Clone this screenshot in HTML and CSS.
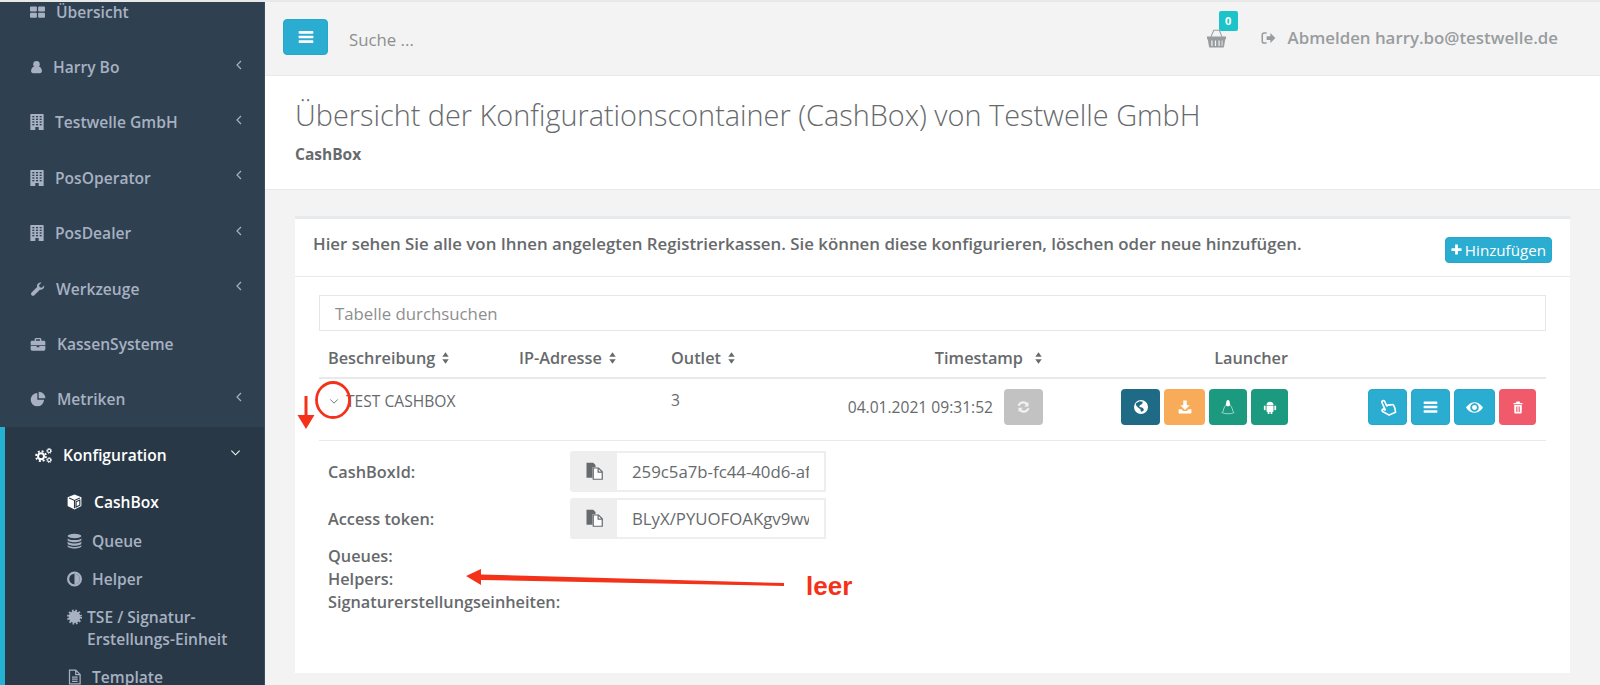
FILE: index.html
```html
<!DOCTYPE html>
<html lang="de">
<head>
    <meta charset="UTF-8">
    <title>Konfigurationscontainer</title>
    <link rel="stylesheet" href="styles.css">
</head>
<body>
    <svg class="sprite" xmlns="http://www.w3.org/2000/svg">
        <symbol id="i-grid" viewBox="0 0 24 24"><rect x="0" y="3" width="11" height="8" rx="1.500"/><rect x="13" y="3" width="11" height="8" rx="1.500"/><rect x="0" y="13" width="11" height="8" rx="1.500"/><rect x="13" y="13" width="11" height="8" rx="1.500"/></symbol>
        <symbol id="i-user" viewBox="0 0 24 24"><circle cx="12" cy="7" r="6"/><path d="M2 20c0-5 2-8 6-9 1 1 2.500 1.500 4 1.500s3-.5 4-1.500c4 1 6 4 6 9 0 2-1.500 3.500-3.500 3.500h-13C3.500 23.500 2 22 2 20z"/></symbol>
        <symbol id="i-building" viewBox="2 0 20 24"><path d="M3 0h18a1 1 0 0 1 1 1v23H2V1a1 1 0 0 1 1-1z"/><g fill="#2f4050"><rect x="5" y="3" width="3" height="2"/><rect x="10.500" y="3" width="3" height="2"/><rect x="16" y="3" width="3" height="2"/><rect x="5" y="7" width="3" height="2"/><rect x="10.500" y="7" width="3" height="2"/><rect x="16" y="7" width="3" height="2"/><rect x="5" y="11" width="3" height="2"/><rect x="10.500" y="11" width="3" height="2"/><rect x="16" y="11" width="3" height="2"/><rect x="5" y="15" width="3" height="2"/><rect x="10.500" y="15" width="3" height="2"/><rect x="16" y="15" width="3" height="2"/><rect x="9.500" y="19.500" width="5" height="4.500"/></g></symbol>
        <symbol id="i-wrench" viewBox="0 0 24 24"><path d="M22.500 6.200c.3 1 .3 2 0 3-.8 2.900-3.800 4.600-6.700 3.800l-8.900 8.900c-1.200 1.200-3.200 1.200-4.400 0s-1.200-3.200 0-4.400l8.900-8.900c-.8-2.900.9-5.900 3.800-6.700 1-.3 2-.3 3 0l-3.700 3.700.9 3.600 3.600.9z"/></symbol>
        <symbol id="i-briefcase" viewBox="0 0 24 24"><path fill-rule="evenodd" d="M9 3h6a2 2 0 0 1 2 2v2h4a2 2 0 0 1 2 2v5H1V9a2 2 0 0 1 2-2h4V5a2 2 0 0 1 2-2zm0 2v2h6V5z"/><path d="M1 15h9v2h4v-2h9v5a2 2 0 0 1-2 2H3a2 2 0 0 1-2-2z"/></symbol>
        <symbol id="i-pie" viewBox="0 0 24 24"><path d="M11 3v10h10a10 10 0 1 1-10-10z"/><path d="M13 1a10 10 0 0 1 10 10H13z"/></symbol>
        <symbol id="i-cogs" viewBox="0 0 24 24"><g fill="none" stroke="currentColor"><circle cx="8.500" cy="13" r="4.200" stroke-width="2.800"/><circle cx="8.500" cy="13" r="7" stroke-width="2.600" stroke-dasharray="2.800 2.700"/><circle cx="20" cy="5.500" r="2.200" stroke-width="1.500"/><circle cx="20" cy="5.500" r="3.500" stroke-width="1.400" stroke-dasharray="1.500 1.250"/><circle cx="20" cy="18.500" r="2.200" stroke-width="1.500"/><circle cx="20" cy="18.500" r="3.500" stroke-width="1.400" stroke-dasharray="1.500 1.250"/></g></symbol>
        <symbol id="i-cube" viewBox="0 0 24 24"><path d="M12 0l11 4.500v14L12 24 1 18.500v-14z"/><path fill="none" stroke="#293846" stroke-width="1.800" d="M3.500 5.500L12 9.500l8.500-4M12 9.500V22M14.500 11.500l6-2.700v8.400l-6 3z"/></symbol>
        <symbol id="i-db" viewBox="0 0 24 24"><ellipse cx="12" cy="4" rx="11" ry="3.500"/><path d="M1 7c0 2 4.500 3.500 11 3.500S23 9 23 7v3.500c0 2-4.500 3.500-11 3.500S1 12.500 1 10.500z"/><path d="M1 12.500c0 2 4.500 3.500 11 3.500s11-1.500 11-3.500V16c0 2-4.500 3.500-11 3.500S1 18 1 16z"/><path d="M1 18c0 2 4.500 3.500 11 3.500S23 20 23 18v2.500c0 2-4.500 3.500-11 3.500S1 22.500 1 20.500z"/></symbol>
        <symbol id="i-adjust" viewBox="0 0 24 24"><path fill-rule="evenodd" d="M12 0a12 12 0 1 0 0 24 12 12 0 0 0 0-24zm0 3.500a8.500 8.500 0 1 1 0 17 8.500 8.500 0 0 1 0-17z"/><path d="M12 3.500a8.500 8.500 0 0 1 0 17z"/></symbol>
        <symbol id="i-cert" viewBox="0 0 24 24"><circle cx="12" cy="12" r="9.500"/><circle cx="12" cy="12" r="10.300" fill="none" stroke="currentColor" stroke-width="3.400" stroke-dasharray="2.700 2.700"/></symbol>
        <symbol id="i-file" viewBox="0 0 24 24"><path fill="none" stroke="currentColor" stroke-width="2" d="M4 1h10l7 7v15H4zM14 1v7h7M8 12h9M8 15.500h9M8 19h9"/></symbol>
        <symbol id="i-bars" viewBox="0 0 24 24"><rect x="1" y="3" width="22" height="4" rx="1"/><rect x="1" y="10" width="22" height="4" rx="1"/><rect x="1" y="17" width="22" height="4" rx="1"/></symbol>
        <symbol id="i-basket" viewBox="0 0 24 24"><path fill="none" stroke="currentColor" stroke-width="1.300" d="M5 10l3.500-8.500h7L19 10"/><path fill-rule="evenodd" d="M0 9.500h24V13h-1l-1.500 9.500a1 1 0 0 1-1 1h-17a1 1 0 0 1-1-1L1 13H0zM5.500 14.500v7h1.500v-7zm4.500 0v7h1.500v-7zm4.500 0v7h1.500v-7zm4 0v7h1v-7z"/></symbol>
        <symbol id="i-signout" viewBox="0 0 24 24"><path fill="none" stroke="currentColor" stroke-width="2.500" d="M9 4H5a3 3 0 0 0-3 3v10a3 3 0 0 0 3 3h4"/><path d="M9 9h6V4l8 8-8 8v-5H9z"/></symbol>
        <symbol id="i-sort" viewBox="0 0 12 24"><path d="M6 2l5.500 8H.5z"/><path d="M6 22L.5 14h11z"/></symbol>
        <symbol id="i-globe" viewBox="0 0 24 24"><path fill-rule="evenodd" d="M12 0a12 12 0 1 0 0 24 12 12 0 0 0 0-24zM4 5l6-3 5 1-1 4-4 2-1 3 5 1 3 3-1 3-4 1-1-4-4-3-3-3-1-3z"/></symbol>
        <symbol id="i-download" viewBox="0 0 24 24"><path d="M9 1h6v8h5l-8 8-8-8h5z"/><path d="M1 16h5l3 3h6l3-3h5v6a1 1 0 0 1-1 1H2a1 1 0 0 1-1-1z"/></symbol>
        <symbol id="i-linux" viewBox="0 0 24 24"><path d="M12 0c-2 0-3 1.800-3 4 0 2-.4 3.500-1.300 5L12 11l4.300-2C15.400 7.500 15 6 15 4c0-2.200-1-4-3-4z"/><path fill="none" stroke="currentColor" stroke-width="1" d="M7.500 9.500C6 12 4 15.500 4 19l-2.500 2.500c3 .8 5 2 7.500 2h6c2.500 0 4.500-1.200 7.500-2L20 19c0-3.500-2-7-3.500-9.500"/></symbol>
        <symbol id="i-android" viewBox="0 0 24 24"><path d="M6 9a6 6 0 0 1 12 0z"/><path d="M6 10h12v9a1.500 1.500 0 0 1-1.500 1.500H16V24h-3v-3.500h-2V24H8v-3.500h-.5A1.500 1.500 0 0 1 6 19z"/><rect x="1.500" y="9.500" width="3" height="8" rx="1.500"/><rect x="19.500" y="9.500" width="3" height="8" rx="1.500"/></symbol>
        <symbol id="i-hand" viewBox="0 0 24 24"><path fill="none" stroke="currentColor" stroke-width="2.200" stroke-linejoin="round" transform="rotate(-24 12 12)" d="M7 3.500a2 2 0 0 1 4 0V10l2-.3c.8 0 1.400.3 1.800.8.800-.3 1.800 0 2.200.8 1.300-.4 2.800.3 2.800 2V17l-1.500 5.500H9L3 14.500c-1-1.500 1-3.300 2.500-2.200L7 14z"/></symbol>
        <symbol id="i-eye" viewBox="0 0 24 24"><path fill-rule="evenodd" d="M0 12s4.500-7.500 12-7.500S24 12 24 12s-4.500 7.500-12 7.500S0 12 0 12zm12-6a6 6 0 1 0 0 12 6 6 0 0 0 0-12z"/><circle cx="12" cy="12" r="3.500"/></symbol>
        <symbol id="i-trash" viewBox="0 0 24 24"><path d="M9 0h6l1.500 3H21v2.500H3V3h4.500z"/><path fill-rule="evenodd" d="M4.500 7h15v15a2 2 0 0 1-2 2h-11a2 2 0 0 1-2-2zM8 10v11h1.500V10zm3.200 0v11h1.600V10zm3.300 0v11H16V10z"/></symbol>
        <symbol id="i-files" viewBox="0 0 24 24"><path d="M2 1h9l3 3v3h-4v14H2z"/><path fill="#fff" stroke="currentColor" stroke-width="1.600" d="M11 8h7l5 5v10H11z"/><path fill="none" stroke="currentColor" stroke-width="1.600" d="M17.500 8v5.500H23"/></symbol>
        <symbol id="i-refresh" viewBox="0 0 24 24"><path d="M20 4v7h-7l2.800-2.800A6 6 0 0 0 6 10H2.500A9.500 9.500 0 0 1 18.300 5.700z"/><path d="M4 20v-7h7l-2.800 2.800A6 6 0 0 0 18 14h3.500A9.500 9.500 0 0 1 5.700 18.300z"/></symbol>
        <symbol id="i-plus" viewBox="0 0 24 24"><path d="M9 1h6v8h8v6h-8v8H9v-8H1V9h8z"/></symbol>
        <symbol id="i-left" viewBox="0 0 12 24"><path fill="none" stroke="currentColor" stroke-width="2.400" d="M10 4l-8 8 8 8"/></symbol>
        <symbol id="i-down" viewBox="0 0 24 12"><path fill="none" stroke="currentColor" stroke-width="2.200" d="M3 1l9 9 9-9"/></symbol>
    </svg>

    <aside class="sidebar">
        <ul class="nav">
            <li class="nav-item"><svg class="ico w15"><use href="#i-grid"/></svg>Übersicht</li>
            <li class="nav-item"><svg class="ico w13 pull"><use href="#i-user"/></svg>Harry Bo<svg class="arrow"><use href="#i-left"/></svg></li>
            <li class="nav-item"><svg class="ico w14"><use href="#i-building"/></svg>Testwelle GmbH<svg class="arrow"><use href="#i-left"/></svg></li>
            <li class="nav-item"><svg class="ico w14"><use href="#i-building"/></svg>PosOperator<svg class="arrow"><use href="#i-left"/></svg></li>
            <li class="nav-item"><svg class="ico w14"><use href="#i-building"/></svg>PosDealer<svg class="arrow"><use href="#i-left"/></svg></li>
            <li class="nav-item"><svg class="ico w15"><use href="#i-wrench"/></svg>Werkzeuge<svg class="arrow"><use href="#i-left"/></svg></li>
            <li class="nav-item"><svg class="ico w16"><use href="#i-briefcase"/></svg>KassenSysteme</li>
            <li class="nav-item"><svg class="ico w16"><use href="#i-pie"/></svg>Metriken<svg class="arrow"><use href="#i-left"/></svg></li>
            <li class="nav-group">
                <div class="nav-item active"><svg class="ico w17"><use href="#i-cogs"/></svg>Konfiguration<svg class="arrow-down"><use href="#i-down"/></svg></div>
                <ul class="subnav">
                    <li class="sub-item current"><svg class="ico w15"><use href="#i-cube"/></svg>CashBox</li>
                    <li class="sub-item"><svg class="ico w15"><use href="#i-db"/></svg>Queue</li>
                    <li class="sub-item"><svg class="ico w15"><use href="#i-adjust"/></svg>Helper</li>
                    <li class="sub-item tight"><svg class="ico w15"><use href="#i-cert"/></svg><span>TSE / Signatur-<br>Erstellungs-Einheit</span></li>
                    <li class="sub-item"><svg class="ico w15"><use href="#i-file"/></svg>Template</li>
                </ul>
            </li>
        </ul>
    </aside>

    <main class="main">
        <header class="topbar">
            <button class="btn btn-blue menu-btn"><svg class="ico w16"><use href="#i-bars"/></svg></button>
            <span class="search">Suche ...</span>
            <div class="basket">
                <svg class="basket-ico"><use href="#i-basket"/></svg>
                <span class="badge">0</span>
            </div>
            <svg class="ico w15 logout-ico"><use href="#i-signout"/></svg>
            <span class="logout">Abmelden harry.bo@testwelle.de</span>
        </header>

        <section class="heading">
            <h2>Übersicht der Konfigurationscontainer (CashBox) von Testwelle GmbH</h2>
            <strong>CashBox</strong>
        </section>

        <section class="card">
            <div class="card-head">
                <h5>Hier sehen Sie alle von Ihnen angelegten Registrierkassen. Sie können diese konfigurieren, löschen oder neue hinzufügen.</h5>
                <button class="btn btn-blue add-btn"><svg class="ico w11"><use href="#i-plus"/></svg>Hinzufügen</button>
            </div>
            <div class="card-body">
                <input class="filter" type="text" placeholder="Tabelle durchsuchen">
                <table class="list">
                    <colgroup>
                        <col class="c1"><col class="c2"><col class="c3"><col class="c4"><col class="c5"><col class="c6">
                    </colgroup>
                    <thead>
                        <tr>
                            <th>Beschreibung<svg class="sort"><use href="#i-sort"/></svg></th>
                            <th>IP-Adresse<svg class="sort"><use href="#i-sort"/></svg></th>
                            <th>Outlet<svg class="sort"><use href="#i-sort"/></svg></th>
                            <th class="right">Timestamp<svg class="sort far"><use href="#i-sort"/></svg></th>
                            <th class="right">Launcher</th>
                            <th></th>
                        </tr>
                    </thead>
                    <tbody>
                        <tr class="row">
                            <td class="name"><svg class="chev"><use href="#i-down"/></svg>TEST CASHBOX</td>
                            <td></td>
                            <td>3</td>
                            <td>
                                <div class="btn-row stamp">04.01.2021 09:31:52
                                    <button class="btn btn-grey w39"><svg class="ico w15"><use href="#i-refresh"/></svg></button>
                                </div>
                            </td>
                            <td>
                                <div class="btn-row">
                                    <button class="btn btn-navy w39"><svg class="ico w14"><use href="#i-globe"/></svg></button>
                                    <button class="btn btn-orange w41"><svg class="ico w14"><use href="#i-download"/></svg></button>
                                    <button class="btn btn-green w38"><svg class="ico w14 tall"><use href="#i-linux"/></svg></button>
                                    <button class="btn btn-green w37"><svg class="ico w14"><use href="#i-android"/></svg></button>
                                </div>
                            </td>
                            <td>
                                <div class="btn-row">
                                    <button class="btn btn-blue w39"><svg class="ico w18"><use href="#i-hand"/></svg></button>
                                    <button class="btn btn-blue w39"><svg class="ico w15"><use href="#i-bars"/></svg></button>
                                    <button class="btn btn-blue w41"><svg class="ico w17"><use href="#i-eye"/></svg></button>
                                    <button class="btn btn-red w37"><svg class="ico w12"><use href="#i-trash"/></svg></button>
                                </div>
                            </td>
                        </tr>
                        <tr>
                            <td colspan="6" class="detail">
                                <div class="field">
                                    <label>CashBoxId:</label>
                                    <span class="addon"><svg class="ico w18"><use href="#i-files"/></svg></span>
                                    <input class="value" type="text" readonly value="259c5a7b-fc44-40d6-afe1-7c3d">
                                </div>
                                <div class="field">
                                    <label>Access token:</label>
                                    <span class="addon"><svg class="ico w18"><use href="#i-files"/></svg></span>
                                    <input class="value" type="text" readonly value="BLyX/PYUOFOAKgv9wwE3kQ">
                                </div>
                                <div class="info">Queues:</div>
                                <div class="info">Helpers:</div>
                                <div class="info">Signaturerstellungseinheiten:</div>
                            </td>
                        </tr>
                    </tbody>
                </table>
            </div>
        </section>
    </main>

    <!-- rote Markierungen im Screenshot -->
    <svg class="marks" viewBox="0 0 1600 685">
        <ellipse cx="333" cy="400" rx="16.500" ry="17.500" fill="none" stroke="#f4321a" stroke-width="2.800"/>
        <path d="M304.500 396h3v19h7l-8.500 14-8.500-14h7z" fill="#f4321a"/>
        <path d="M466 576l15-7v5.500l303 8.500v3l-303-6v5z" fill="#f4321a"/>
    </svg>
    <span class="leer">leer</span>
</body>
</html>
```

FILE: styles.css
```css
* {
    box-sizing: border-box;
}

html, body {
    height: 685px;
    overflow: hidden;
}

body {
    margin: 0;
    padding-top: 2px;
    display: flex;
    background-color: #e8e8e8;
    font-family: 'Open Sans', 'Liberation Sans', sans-serif;
    font-size: 15.6px;
    color: #676a6c;
}

ul {
    list-style: none;
    margin: 0;
    padding: 0;
}

.sprite {
    display: none;
}

.ico {
    fill: currentColor;
    flex: none;
    height: 16px;
}

.w11 { width: 11px; height: 11px; }
.w12 { width: 12px; height: 15px; }
.w13 { width: 13px; }
.w14 { width: 14px; }
.w15 { width: 15px; }
.w16 { width: 16px; }
.w17 { width: 17px; height: 17px; }
.w18 { width: 18px; height: 18px; }
.tall { height: 18px; }

/* Seitenleiste */
.sidebar {
    width: 265px;
    flex: none;
    height: 683px;
    overflow: hidden;
    background-color: #2f4050;
    border-right: 1px solid #3b4c5c;
}

.nav {
    margin-top: -18px;
}

.nav-item {
    height: 55.4px;
    padding: 0 22px 0 30px;
    display: flex;
    align-items: center;
    gap: 11px;
    color: #a7b1c2;
    font-weight: 600;
    font-size: 15.6px;
}

.pull {
    margin-right: -1px;
}

.arrow {
    width: 6px;
    height: 12px;
    margin-left: auto;
    margin-top: -5px;
}

.nav-group {
    background-color: #293846;
    border-left: 5px solid #25b1d3;
}

.nav-item.active {
    height: 56px;
    padding: 0 23px 0 30px;
    color: #fff;
}

.arrow-down {
    width: 11px;
    height: 6px;
    margin-left: auto;
    margin-top: -5px;
}

.sub-item {
    height: 38.4px;
    padding-left: 62px;
    display: flex;
    align-items: center;
    gap: 10px;
    color: #a7b1c2;
    font-weight: 600;
}

.sub-item.current {
    color: #fff;
    gap: 12px;
}

.sub-item.tight {
    height: 60px;
    align-items: flex-start;
    padding-top: 8px;
    gap: 5px;
    line-height: 22px;
}

.sub-item.tight .ico {
    margin-top: 3px;
}

/* Hauptbereich */
.main {
    flex: 1;
    min-width: 0;
    background-color: #f3f3f4;
}

.topbar {
    height: 73px;
    padding: 0 42px 0 18px;
    display: flex;
    align-items: center;
    border-bottom: 1px solid #e7eaec;
    margin-top: 1px;
}

.btn {
    border: 1px solid transparent;
    border-radius: 4px;
    padding: 0;
    height: 36px;
    color: #fff;
    display: inline-flex;
    align-items: center;
    justify-content: center;
    font-family: inherit;
}

.btn-blue { background-color: #2bacd1; border-color: #25a6cb; }
.btn-navy { background-color: #1f6b85; }
.btn-orange { background-color: #f8ac59; }
.btn-green { background-color: #1b9a80; }
.btn-red { background-color: #f05a6b; }
.btn-grey { background-color: #c2c2c2; color: #f2f2f2; }

.w37 { width: 37px; }
.w38 { width: 38px; }
.w39 { width: 39px; }
.w40 { width: 40px; }
.w41 { width: 41px; }

.menu-btn {
    width: 45px;
    margin-top: -4px;
}

.search {
    margin-left: 21px;
    margin-top: 1px;
    font-size: 16.800px;
    color: #8e8e8e;
}

.basket {
    margin-left: auto;
    position: relative;
    width: 19px;
    height: 19px;
    margin-top: -2px;
    color: #999c9e;
}

.basket-ico {
    display: block;
    width: 19px;
    height: 19px;
    fill: currentColor;
}

.badge {
    position: absolute;
    left: 12px;
    top: -18px;
    width: 19px;
    height: 20px;
    border-radius: 2px;
    background-color: #1cc4c9;
    color: #fff;
    font-size: 11px;
    font-weight: 700;
    line-height: 20px;
    text-align: center;
}

.logout-ico {
    margin-left: 35px;
    margin-top: -3px;
    color: #999c9e;
}

.logout {
    margin-left: 12px;
    margin-top: -3px;
    font-weight: 600;
    font-size: 16.850px;
    color: #999c9e;
}

.heading {
    height: 114px;
    padding: 21px 30px 0;
    background-color: #fff;
    border-bottom: 1px solid #e7eaec;
}

.heading h2 {
    margin: 0;
    font-size: 28.850px;
    font-weight: 300;
    line-height: 36px;
    color: #676a6c;
}

.heading strong {
    display: block;
    margin-top: 10px;
    font-weight: 700;
    font-size: 15.500px;
}

.card {
    margin: 26px 30px 0;
    height: 457px;
    background-color: #fff;
    border-top: 3px solid #e7eaec;
}

.card-head {
    height: 58px;
    padding: 0 18px;
    display: flex;
    align-items: center;
    justify-content: space-between;
    border-bottom: 1px solid #e7eaec;
}

.card-head h5 {
    margin: -8px 0 0;
    font-size: 16.850px;
    font-weight: 600;
    color: #676a6c;
}

.add-btn {
    width: 107px;
    height: 26px;
    gap: 3px;
    font-size: 15.200px;
    margin-top: 4px;
}

.card-body {
    padding: 18px 24px;
}

.filter {
    display: block;
    width: 100%;
    height: 36px;
    padding: 0 15px;
    border: 1px solid #e5e6e7;
    font-family: inherit;
    font-size: 16.800px;
}

.filter::placeholder {
    color: #8e8e8e;
}

.list {
    width: 1227px;
    table-layout: fixed;
    border-collapse: collapse;
}

.c1 { width: 191px; }
.c2 { width: 152px; }
.c3 { width: 128px; }
.c4 { width: 263px; }
.c5 { width: 245px; }
.c6 { width: 248px; }

.list th {
    height: 47px;
    padding: 16px 10px 0 9px;
    vertical-align: top;
    text-align: left;
    font-size: 16.300px;
    font-weight: 600;
    line-height: 22px;
    border-bottom: 2px solid #e7eaec;
}

.list th.right {
    text-align: right;
}

.sort {
    width: 9px;
    height: 14px;
    margin-left: 6px;
    fill: currentColor;
    vertical-align: -1px;
}

.sort.far {
    margin-left: 11px;
}

.row td {
    height: 62px;
    padding: 10px 10px 0 9px;
    vertical-align: top;
    border-bottom: 1px solid #e7eaec;
    line-height: 22px;
}

.row td.name {
    padding-top: 11px;
    padding-left: 10px;
}

.chev {
    width: 10px;
    height: 5px;
    margin-right: 7px;
    fill: #676a6c;
    vertical-align: 3px;
}

.btn-row {
    display: flex;
    justify-content: flex-end;
    gap: 4px;
}

.stamp {
    gap: 11px;
    align-items: center;
}

.detail {
    padding: 10px 10px 0 9px;
}

.field {
    display: flex;
    align-items: center;
    height: 41px;
    margin-bottom: 6px;
}

.field label {
    width: 242px;
    padding-top: 2px;
    font-size: 16.300px;
    font-weight: 600;
}

.addon {
    width: 47px;
    height: 41px;
    display: flex;
    align-items: center;
    justify-content: center;
    background-color: #eeeeee;
    border-radius: 3px 0 0 3px;
    color: #676a6c;
}

.value {
    width: 209px;
    height: 41px;
    padding: 0 15px;
    border: 2px solid #eeeeee;
    border-left: 0;
    font-family: inherit;
    font-size: 16.800px;
    color: #676a6c;
    outline: none;
}

.info {
    font-size: 16.300px;
    font-weight: 600;
    line-height: 23px;
}

/* Annotationen */
.marks {
    position: absolute;
    left: 0;
    top: 0;
    width: 1600px;
    height: 685px;
    pointer-events: none;
}

.leer {
    position: absolute;
    left: 806px;
    top: 571px;
    font-family: 'Liberation Sans', sans-serif;
    font-weight: 700;
    font-size: 26px;
    line-height: 30px;
    color: #f4321a;
}
```
